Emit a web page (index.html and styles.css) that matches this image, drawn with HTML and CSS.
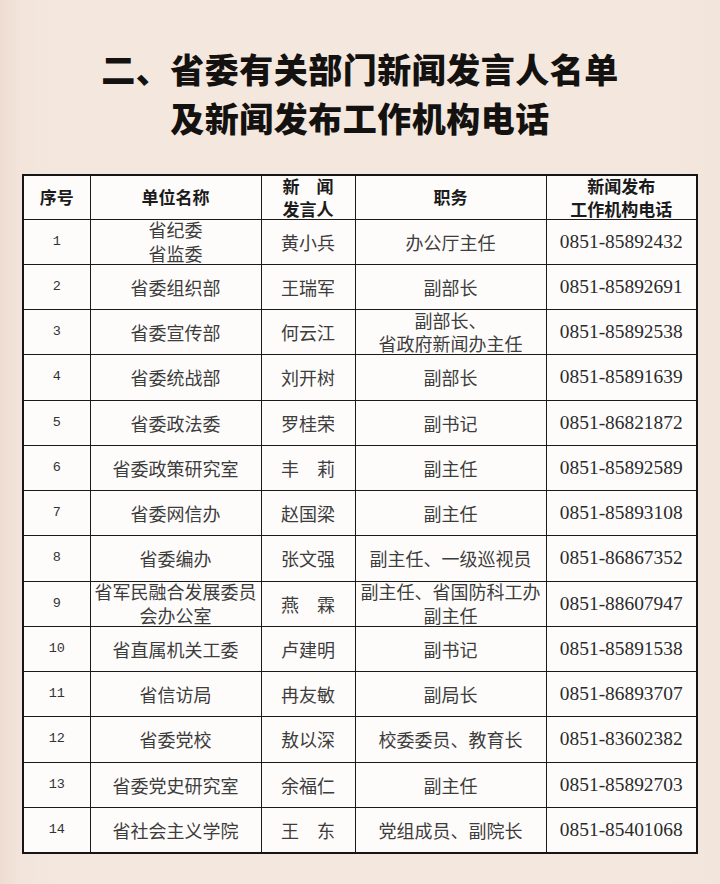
FILE: index.html
```html
<!DOCTYPE html>
<html lang="zh-CN">
<head>
<meta charset="utf-8">
<title>省委有关部门新闻发言人名单</title>
<link rel="stylesheet" href="styles.css">
</head>
<body>
<div class="page">
  <h1 class="title">
    <span class="title-line">二、省委有关部门新闻发言人名单</span>
    <span class="title-line">及新闻发布工作机构电话</span>
  </h1>
  <table class="roster">
    <colgroup>
      <col class="c-no"><col class="c-unit"><col class="c-name"><col class="c-post"><col class="c-tel">
    </colgroup>
    <thead>
      <tr>
        <th>序号</th>
        <th>单位名称</th>
        <th><div class="stack">新　闻<br>发言人</div></th>
        <th>职务</th>
        <th><div class="stack">新闻发布<br>工作机构电话</div></th>
      </tr>
    </thead>
    <tbody>
      <tr><td class="no">1</td><td><div class="stack">省纪委<br>省监委</div></td><td>黄小兵</td><td>办公厅主任</td><td class="tel">0851-85892432</td></tr>
      <tr><td class="no">2</td><td>省委组织部</td><td>王瑞军</td><td>副部长</td><td class="tel">0851-85892691</td></tr>
      <tr><td class="no">3</td><td>省委宣传部</td><td>何云江</td><td><div class="stack">副部长、<br>省政府新闻办主任</div></td><td class="tel">0851-85892538</td></tr>
      <tr><td class="no">4</td><td>省委统战部</td><td>刘开树</td><td>副部长</td><td class="tel">0851-85891639</td></tr>
      <tr><td class="no">5</td><td>省委政法委</td><td>罗桂荣</td><td>副书记</td><td class="tel">0851-86821872</td></tr>
      <tr><td class="no">6</td><td>省委政策研究室</td><td>丰　莉</td><td>副主任</td><td class="tel">0851-85892589</td></tr>
      <tr><td class="no">7</td><td>省委网信办</td><td>赵国梁</td><td>副主任</td><td class="tel">0851-85893108</td></tr>
      <tr><td class="no">8</td><td>省委编办</td><td>张文强</td><td>副主任、一级巡视员</td><td class="tel">0851-86867352</td></tr>
      <tr><td class="no">9</td><td><div class="stack">省军民融合发展委员<br>会办公室</div></td><td>燕　霖</td><td><div class="stack">副主任、省国防科工办<br>副主任</div></td><td class="tel">0851-88607947</td></tr>
      <tr><td class="no">10</td><td>省直属机关工委</td><td>卢建明</td><td>副书记</td><td class="tel">0851-85891538</td></tr>
      <tr><td class="no">11</td><td>省信访局</td><td>冉友敏</td><td>副局长</td><td class="tel">0851-86893707</td></tr>
      <tr><td class="no">12</td><td>省委党校</td><td>敖以深</td><td>校委委员、教育长</td><td class="tel">0851-83602382</td></tr>
      <tr><td class="no">13</td><td>省委党史研究室</td><td>余福仁</td><td>副主任</td><td class="tel">0851-85892703</td></tr>
      <tr><td class="no">14</td><td>省社会主义学院</td><td>王　东</td><td>党组成员、副院长</td><td class="tel">0851-85401068</td></tr>
    </tbody>
  </table>
</div>
</body>
</html>
```

FILE: styles.css
```css
html, body {
  margin: 0;
  padding: 0;
}

body {
  background: #f3e6dc;
  font-family: "Noto Sans CJK SC", "Noto Sans", sans-serif;
  width: 720px;
  height: 884px;
  overflow: hidden;
}

.page {
  background: linear-gradient(90deg, #eedcd1 0, #f2e4da 18px, #f4e8de 60px, #f4e8de 660px, #f2e5db 100%);
  height: 884px;
  padding-top: 44px;
  box-sizing: border-box;
}

.title {
  margin: 0 0 32px;
  display: flex;
  flex-direction: column;
  align-items: center;
  font-size: 34px;
  line-height: 49px;
  font-weight: 900;
  color: #141210;
  letter-spacing: 0.5px;
}

.roster {
  margin: 0 auto;
  width: 674px;
  border-collapse: collapse;
  table-layout: fixed;
  background: #fdfcfb;
  border: 2px solid #151515;
}

.c-no { width: 67px; }
.c-unit { width: 171px; }
.c-name { width: 94px; }
.c-post { width: 191px; }
.c-tel { width: 151px; }

.roster th,
.roster td {
  border: 1.5px solid #1a1a1a;
  text-align: center;
  vertical-align: middle;
  padding: 0;
}

.roster thead tr {
  height: 44px;
}

.roster th {
  font-size: 17px;
  font-weight: 700;
  color: #1b1b1b;
  line-height: 22px;
}

.roster tbody tr {
  height: 45.25px;
}

.roster td {
  font-size: 18px;
  color: #3d3d3d;
  line-height: 22px;
  white-space: nowrap;
}

.stack {
  line-height: 23.5px;
  margin: -3px 0;
}

.roster th .stack {
  line-height: 23px;
}

.roster td.no {
  font-family: "Liberation Mono", monospace;
  font-size: 13.5px;
  color: #333;
}

.roster td.tel {
  font-family: "Liberation Serif", serif;
  font-size: 19.4px;
  color: #2a2a2a;
}
```
